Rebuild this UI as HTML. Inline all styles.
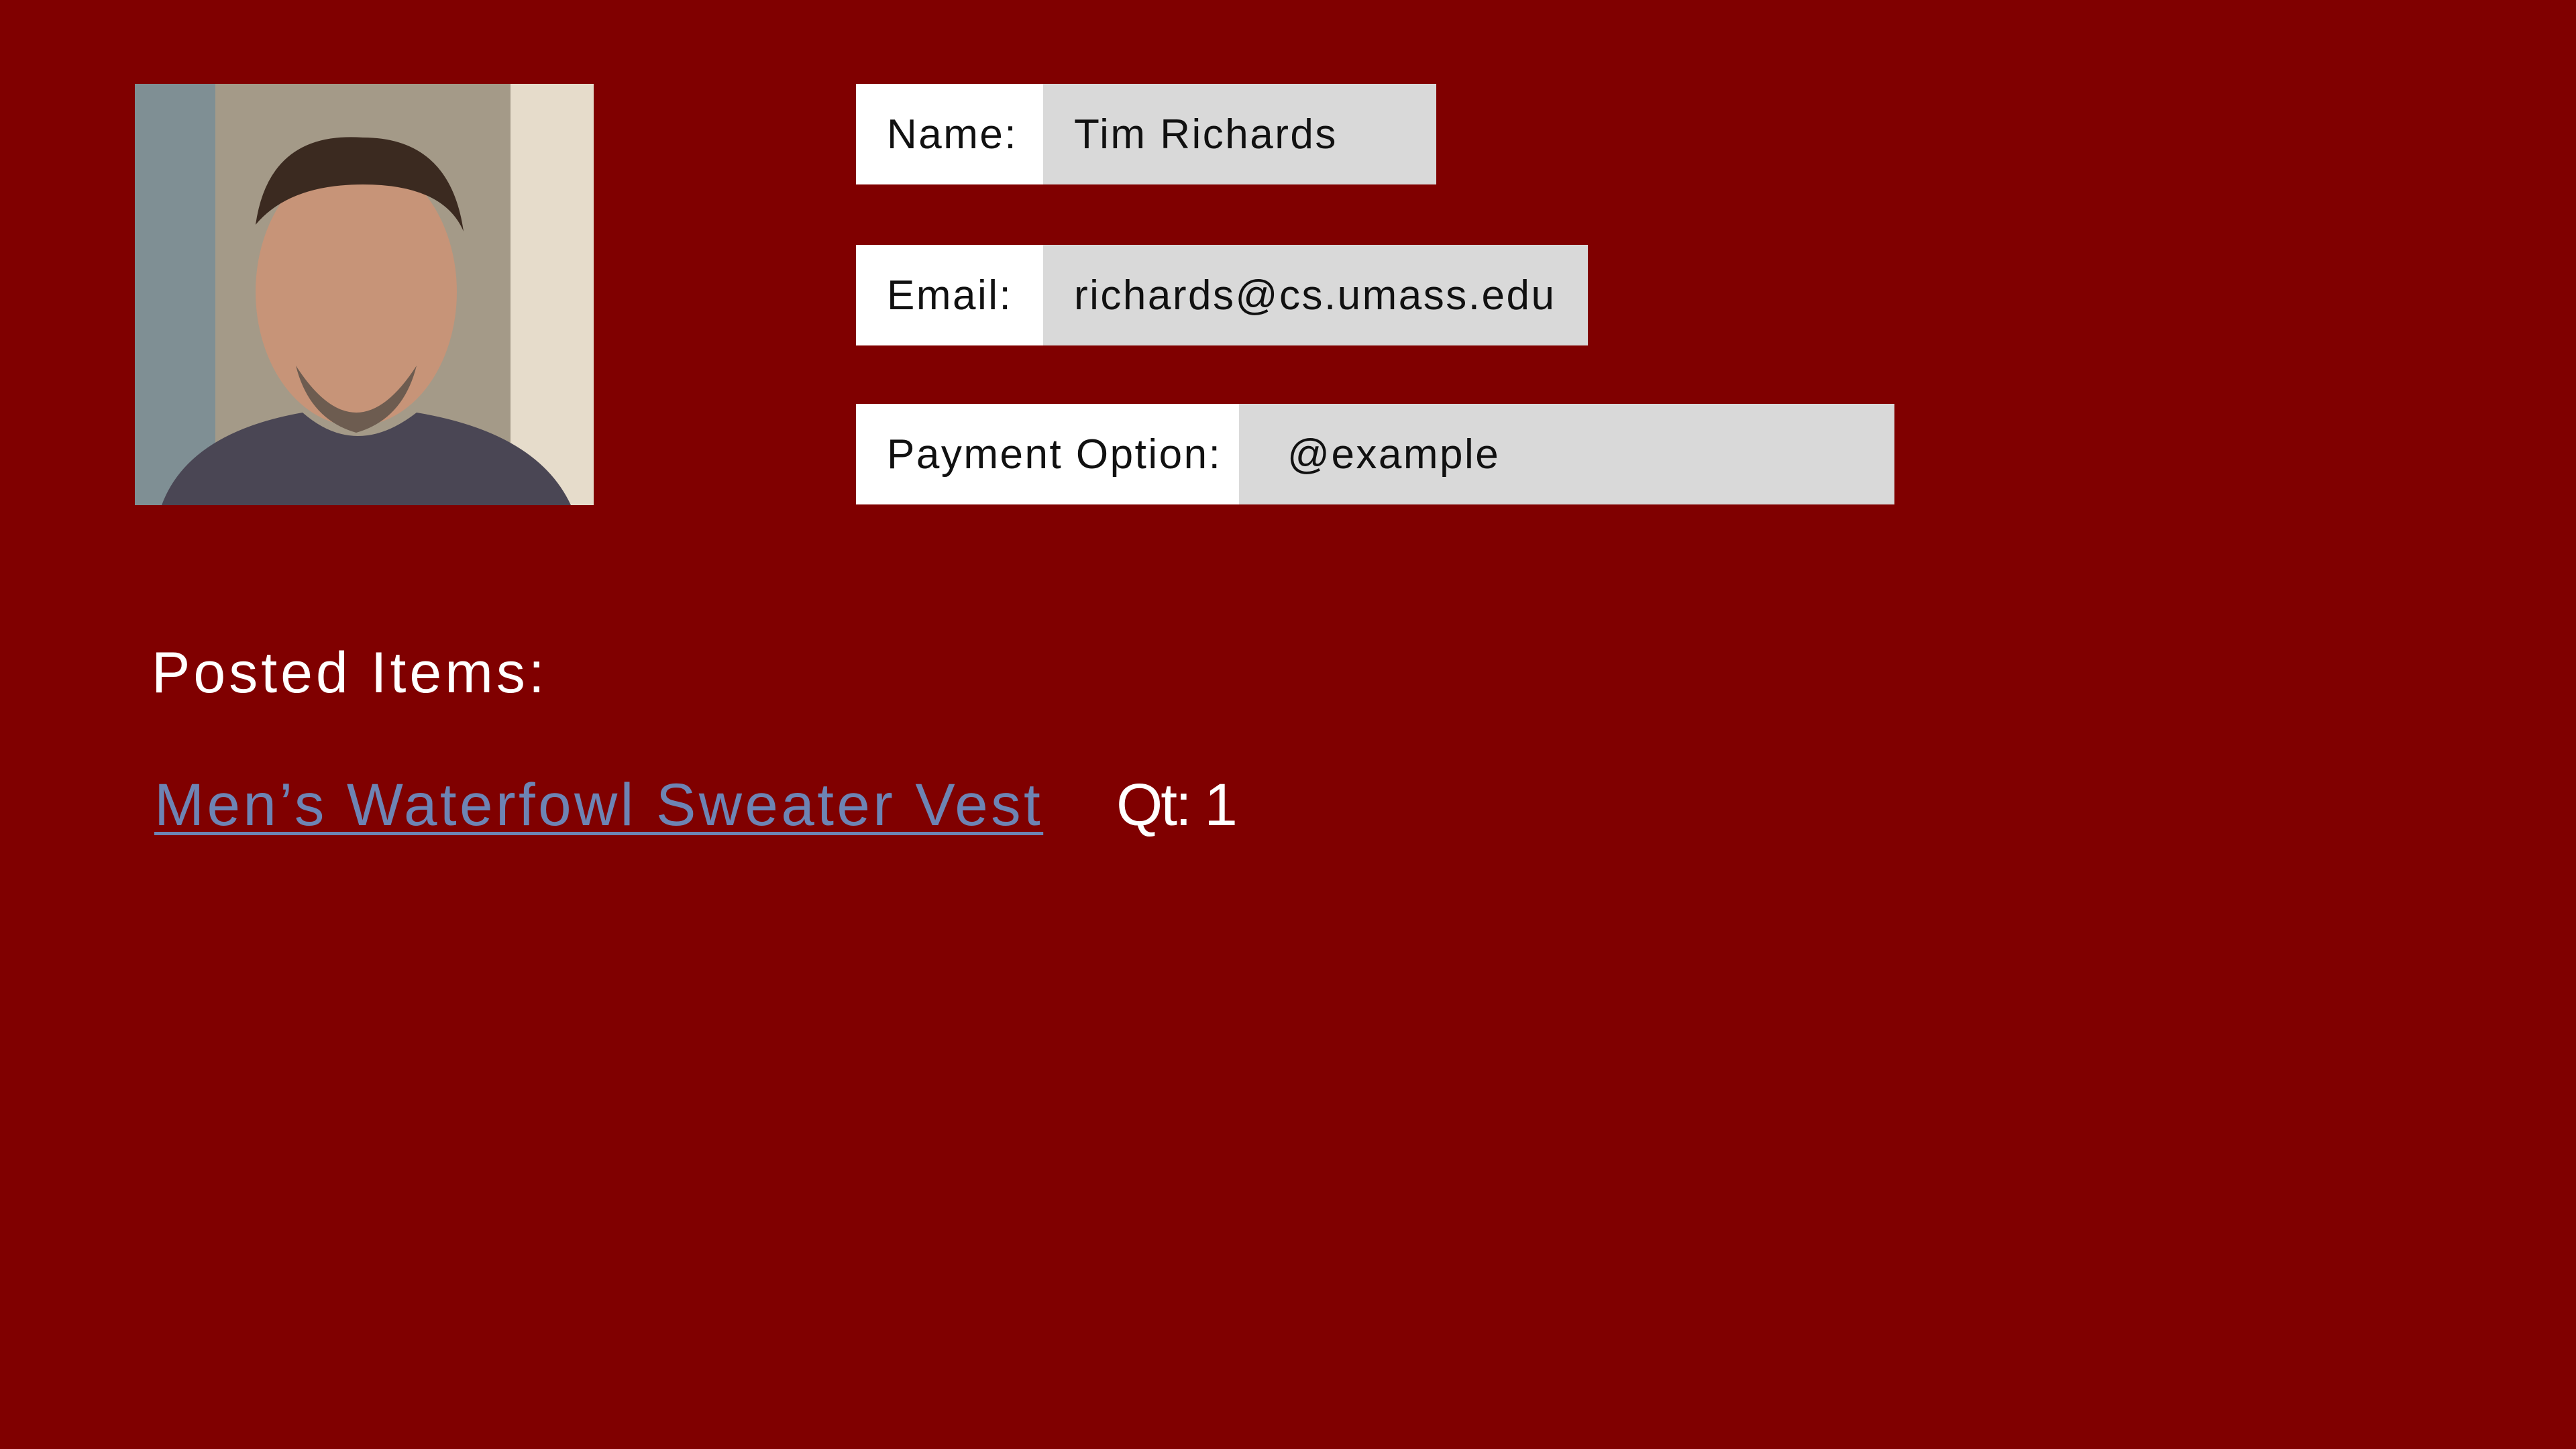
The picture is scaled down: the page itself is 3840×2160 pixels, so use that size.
<!DOCTYPE html>
<html><head><meta charset="utf-8"><style>
html,body{margin:0;padding:0;width:3840px;height:2160px;background:#800000;overflow:hidden;font-family:"Liberation Sans",sans-serif;}
.abs{position:absolute;}
.lab{background:#fff;color:#111;font-size:62px;letter-spacing:2.5px;display:flex;align-items:center;box-sizing:border-box;padding-left:46px;}
.val{background:#d9d9d9;color:#111;font-size:62px;letter-spacing:2.5px;display:flex;align-items:center;box-sizing:border-box;padding-left:46px;}
</style></head><body>
<div class="abs" style="left:201px;top:125px;width:684px;height:628px;overflow:hidden;">
<svg width="684" height="628" viewBox="0 0 684 628">
<rect x="0" y="0" width="684" height="628" fill="#a49a88"/>
<rect x="0" y="0" width="120" height="628" fill="#7f8f94"/>
<rect x="560" y="0" width="124" height="628" fill="#e6dccb"/>
<ellipse cx="330" cy="310" rx="150" ry="200" fill="#c79478"/>
<path d="M180 210 Q200 70 340 80 Q470 80 490 220 Q460 150 340 150 Q230 150 180 210Z" fill="#3b2a20"/>
<path d="M240 420 Q330 560 420 420 Q400 500 330 520 Q260 500 240 420Z" fill="#6d5c50"/>
<path d="M40 628 Q80 520 250 490 Q330 560 420 490 Q600 520 650 628Z" fill="#4a4654"/>
</svg></div>
<div class="abs lab" style="left:1276px;top:125px;width:280px;height:150px;">Name:</div>
<div class="abs val" style="left:1555px;top:125px;width:586px;height:150px;">Tim Richards</div>
<div class="abs lab" style="left:1276px;top:365px;width:280px;height:150px;">Email:</div>
<div class="abs val" style="left:1555px;top:365px;width:812px;height:150px;">richards@cs.umass.edu</div>
<div class="abs lab" style="left:1276px;top:602px;width:572px;height:150px;">Payment Option:</div>
<div class="abs val" style="left:1847px;top:602px;width:977px;height:150px;padding-left:72px;">@example</div>
<div class="abs" style="left:226px;top:948px;color:#fff;font-size:86px;letter-spacing:5px;line-height:110px;">Posted Items:</div>
<div class="abs" style="left:230px;top:1144px;color:#6d84b4;font-size:89px;letter-spacing:4.4px;line-height:110px;text-decoration:underline;text-decoration-thickness:5px;text-underline-offset:10px;">Men’s Waterfowl Sweater Vest</div>
<div class="abs" style="left:1664px;top:1144px;color:#fff;font-size:89px;letter-spacing:-3px;line-height:110px;">Qt: 1</div>
</body></html>
